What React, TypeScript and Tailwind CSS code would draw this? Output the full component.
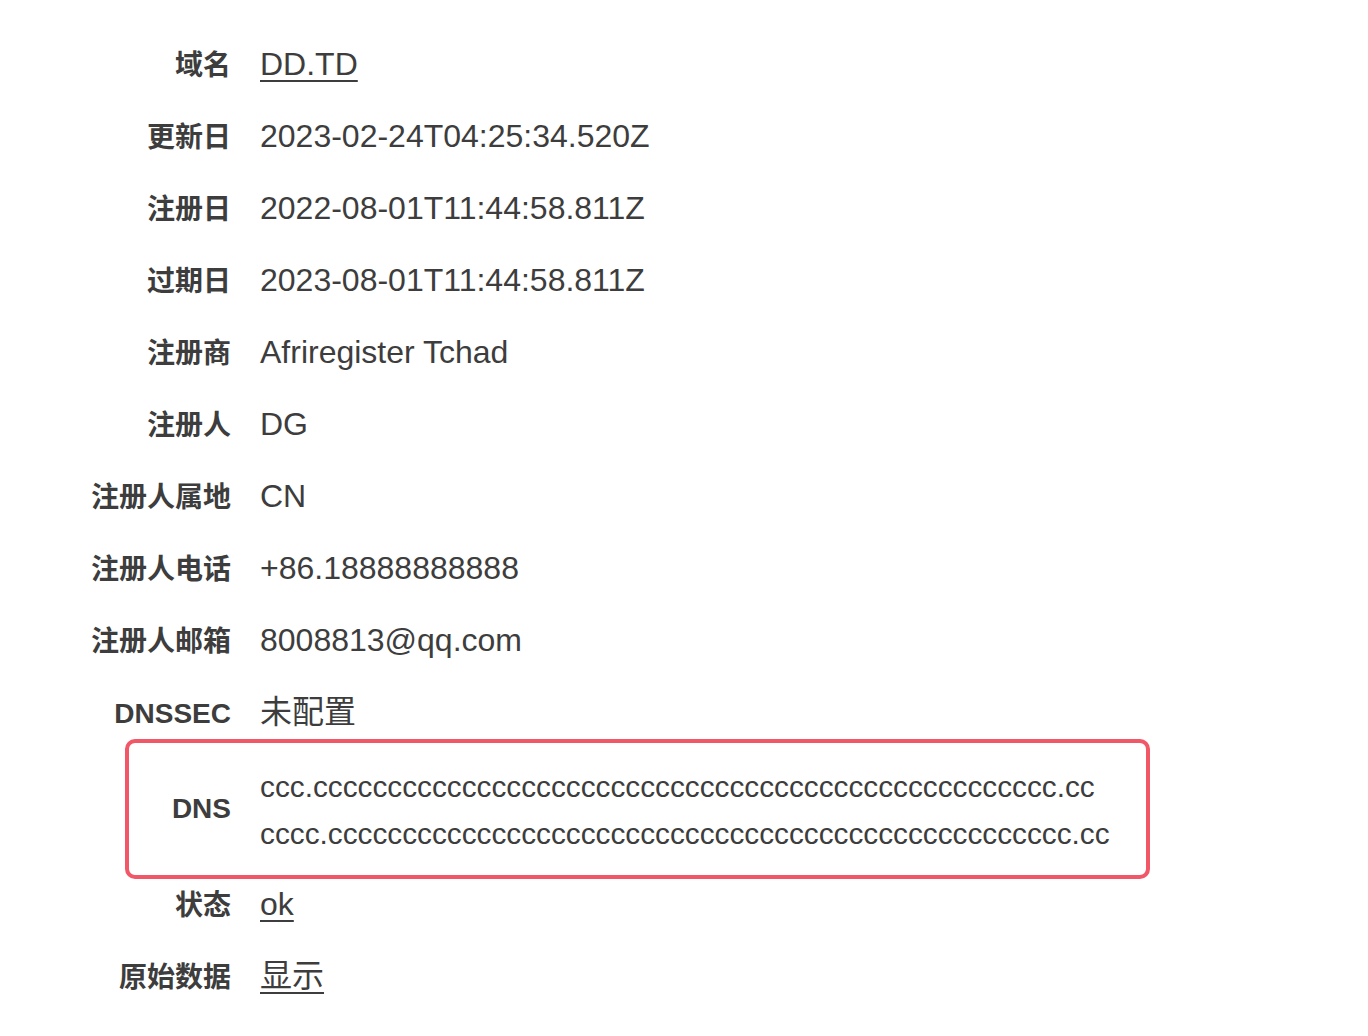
import type { ReactNode } from "react";

const dnsLine1 = "ccc." + "c".repeat(50) + ".cc";
const dnsLine2 = "cccc." + "c".repeat(50) + ".cc";

function Row({ label, children }: { label: string; children: ReactNode }) {
  return (
    <div className="grid grid-cols-[231px_1fr] gap-x-[29px] items-center h-[72px]">
      <div className="text-right text-[28px] font-bold leading-[36px] pt-[3px]">{label}</div>
      <div className="text-[32px] leading-[40px]">{children}</div>
    </div>
  );
}

function Link({ children }: { children: ReactNode }) {
  return (
    <a href="#" className="underline decoration-2 underline-offset-[5px]">
      {children}
    </a>
  );
}

export default function App() {
  return (
    <div className="min-h-screen bg-white text-[#3d3d3d] font-['Liberation_Sans','Noto_Sans_CJK_SC',sans-serif] pt-[28px]">
      <Row label="域名">
        <Link>DD.TD</Link>
      </Row>
      <Row label="更新日">2023-02-24T04:25:34.520Z</Row>
      <Row label="注册日">2022-08-01T11:44:58.811Z</Row>
      <Row label="过期日">2023-08-01T11:44:58.811Z</Row>
      <Row label="注册商">Afriregister Tchad</Row>
      <Row label="注册人">DG</Row>
      <Row label="注册人属地">CN</Row>
      <Row label="注册人电话">+86.18888888888</Row>
      <Row label="注册人邮箱">8008813@qq.com</Row>
      <Row label="DNSSEC">未配置</Row>

      <div className="relative">
        <div className="grid grid-cols-[231px_1fr] gap-x-[29px] items-center h-[120px]">
          <div className="text-right text-[28px] font-bold leading-[36px] pt-[2px]">DNS</div>
          <div className="text-[29.75px] leading-[47px] pt-[3px]">
            <div>{dnsLine1}</div>
            <div>{dnsLine2}</div>
          </div>
        </div>
        <div className="absolute left-[125px] w-[1025px] -top-[9px] -bottom-[11px] border-4 border-[#f25767] rounded-[10px] pointer-events-none" />
      </div>

      <Row label="状态">
        <Link>ok</Link>
      </Row>
      <Row label="原始数据">
        <Link>显示</Link>
      </Row>
    </div>
  );
}
